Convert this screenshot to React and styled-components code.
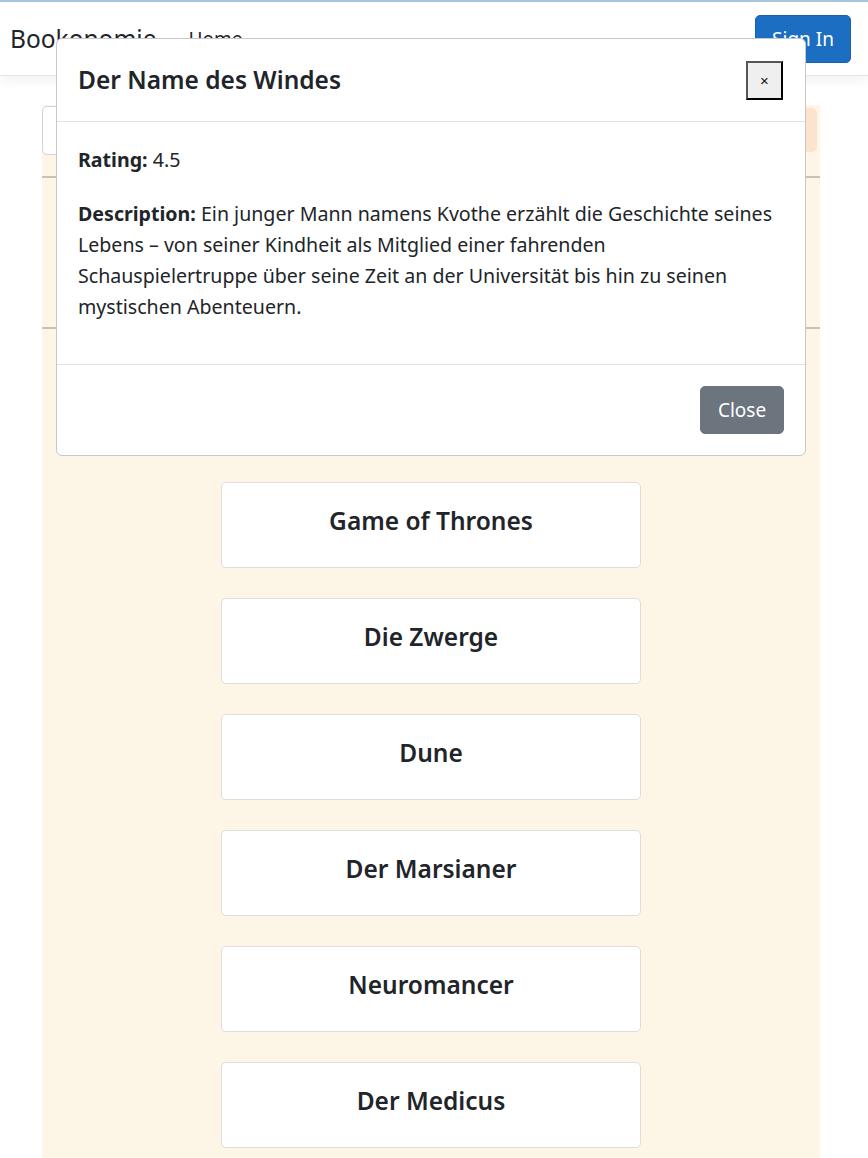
import React from "react"
import styled, { createGlobalStyle } from "styled-components"

const books = [
  "Der Name des Windes",
  "Game of Thrones",
  "Die Zwerge",
  "Dune",
  "Der Marsianer",
  "Neuromancer",
  "Der Medicus",
]

export default function App() {
  return (
    <>
      <GlobalStyle />
      <Navbar>
        <Brand>Bookonomie</Brand>
        <NavLink>Home</NavLink>
        <Spacer />
        <PrimaryButton>Sign In</PrimaryButton>
      </Navbar>
      <Main>
        <Panel>
          <SearchRow>
            <SearchInput />
            <SearchButton>n</SearchButton>
          </SearchRow>
          <Rule />
          <Filters />
          <Rule />
          <BookList>
            {books.map(b => (
              <BookCard key={b}>{b}</BookCard>
            ))}
          </BookList>
        </Panel>
      </Main>

      <Modal>
        <ModalHeader>
          <ModalTitle>Der Name des Windes</ModalTitle>
          <XButton>×</XButton>
        </ModalHeader>
        <ModalBody>
          <Para>
            <b>Rating:</b> 4.5
          </Para>
          <Para>
            <b>Description:</b> Ein junger Mann namens Kvothe erzählt die Geschichte seines
            Lebens – von seiner Kindheit als Mitglied einer fahrenden
            Schauspielertruppe über seine Zeit an der Universität bis hin zu seinen
            mystischen Abenteuern.
          </Para>
        </ModalBody>
        <ModalFooter>
          <SecondaryButton>Close</SecondaryButton>
        </ModalFooter>
      </Modal>
    </>
  )
}

const GlobalStyle = createGlobalStyle`
  html, body {
    margin: 0;
    padding: 0;
    background: #fff;
  }
  body {
    font-family: "Noto Sans", "Open Sans", sans-serif;
    color: #212529;
    border-top: 2px solid #a6c6da;
    overflow: hidden;
  }
  * { box-sizing: border-box; }
`

const Navbar = styled.nav`
  height: 74px;
  display: flex;
  align-items: center;
  padding: 0 17px 0 10px;
  background: #fff;
  box-shadow: 0 4px 12px rgba(0, 0, 0, 0.06);
  border-bottom: 1px solid #e6e6e6;
  position: relative;
  z-index: 1;
`

const Brand = styled.span`
  font-size: 24.5px;
  margin-right: 32px;
`

const NavLink = styled.span`
  font-size: 19px;
  color: #212529;
`

const Spacer = styled.div`
  flex: 1;
`

const PrimaryButton = styled.button`
  width: 96px;
  height: 48px;
  border-radius: 5px;
  border: 1px solid #1861ac;
  background: #1b6ec2;
  color: #fff;
  font-family: inherit;
  font-size: 19px;
`

const Main = styled.main`
  padding: 29px 48px 0 42px;
`

const Panel = styled.div`
  background: #fdf5e6;
  min-height: 1100px;
`

const SearchRow = styled.div`
  display: flex;
  padding-top: 1px;
`

const SearchInput = styled.input`
  flex: 1;
  height: 49px;
  border: 1px solid #ced4da;
  border-radius: 5px;
  background: #fff;
`

const SearchButton = styled.button`
  width: 80px;
  height: 44px;
  margin: 2px 3px 0 0;
  background: #fde3cd;
  color: #1b6ec2;
  border: none;
  border-radius: 5px;
  font-family: inherit;
  font-size: 19px;
  text-align: right;
  padding: 0 12px 0 0;
`

const Rule = styled.hr`
  margin: 21px 0 0;
  border: none;
  border-top: 2px solid #c9c1b3;
`

const Filters = styled.div`
  height: 128px;
`

const BookList = styled.div`
  display: flex;
  flex-direction: column;
  align-items: center;
  gap: 30px;
  padding-top: 37px;
`

const BookCard = styled.div`
  width: 420px;
  height: 86px;
  display: flex;
  align-items: center;
  justify-content: center;
  padding-bottom: 9px;
  background: #fff;
  border: 1px solid #dedede;
  border-radius: 5px;
  font-size: 24.5px;
  font-weight: 600;
  color: #212529;
`

const Modal = styled.div`
  position: fixed;
  top: 38px;
  left: 56px;
  width: 750px;
  background: #fff;
  border: 1px solid #c7c7c7;
  border-radius: 6px;
  z-index: 10;
`

const ModalHeader = styled.div`
  height: 83px;
  display: flex;
  align-items: center;
  justify-content: space-between;
  padding: 0 22px 0 21px;
  border-bottom: 1px solid #dee2e6;
`

const ModalTitle = styled.h5`
  margin: 0;
  font-size: 24.5px;
  font-weight: 600;
  line-height: 1.2;
`

const XButton = styled.button`
  width: 37px;
  height: 39px;
  margin-top: 1px;
  background: #efefef;
  border: 2px solid;
  border-color: #555 #000 #000 #555;
  font-size: 15px;
  padding: 0;
  color: #111;
`

const ModalBody = styled.div`
  padding: 22px 20px 19px 21px;
  font-size: 19.6px;
  line-height: 31px;
`

const Para = styled.p`
  margin: 0 0 23px;
  b {
    font-weight: 700;
  }
`

const ModalFooter = styled.div`
  display: flex;
  justify-content: flex-end;
  padding: 21px;
  border-top: 1px solid #dee2e6;
`

const SecondaryButton = styled.button`
  width: 84px;
  height: 48px;
  background: #6c757d;
  color: #fff;
  border: 1px solid #6c757d;
  border-radius: 5px;
  font-family: inherit;
  font-size: 19px;
`
